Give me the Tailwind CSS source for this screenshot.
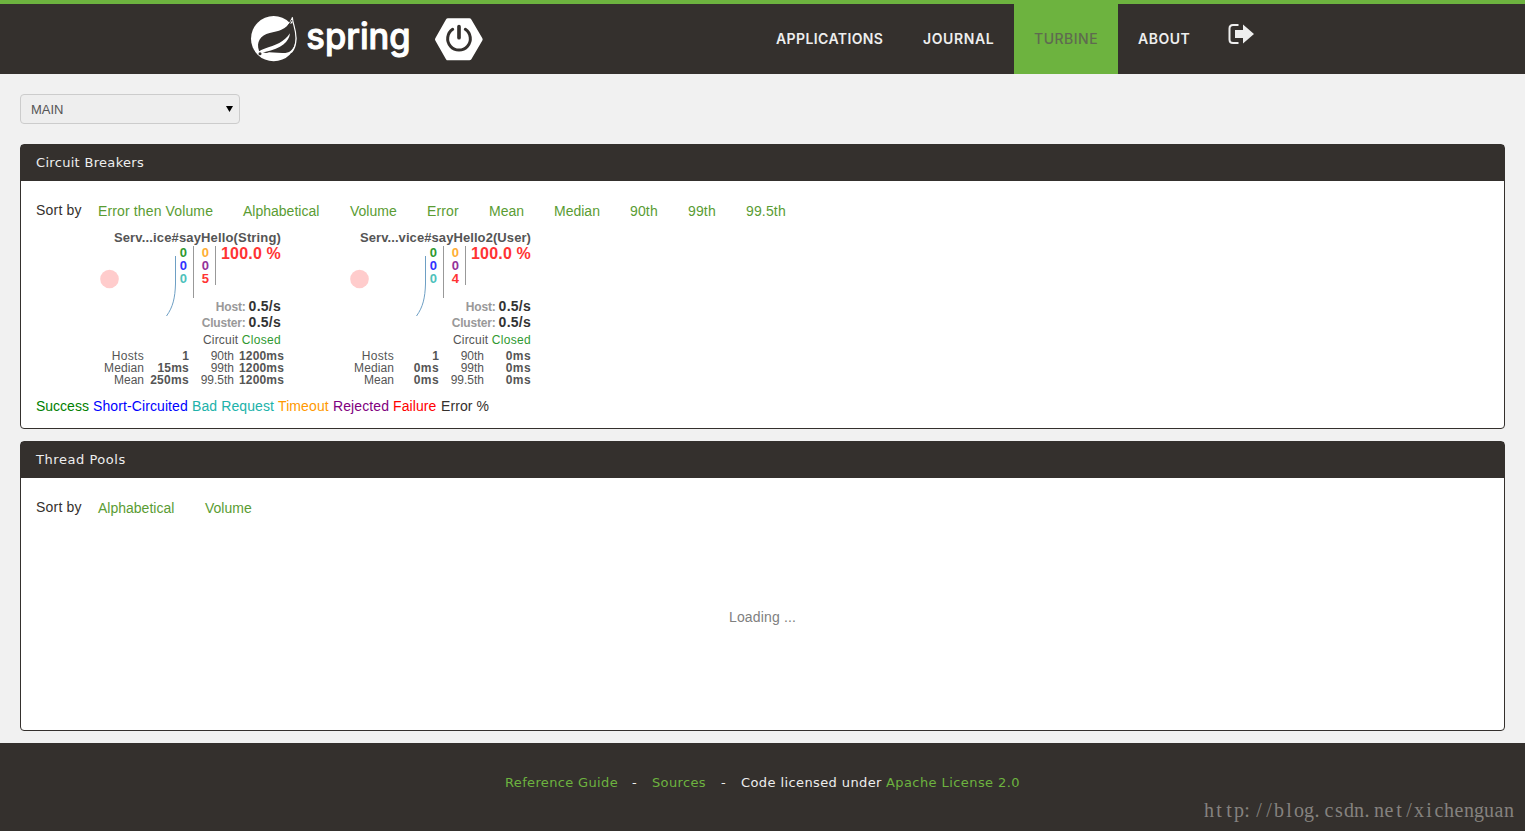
<!DOCTYPE html>
<html lang="en">
<head>
<meta charset="utf-8">
<title>Turbine</title>
<script src="https://cdn.jsdelivr.net/npm/@tailwindcss/browser@4"></script>
</head>
<body class="flex h-[831px] flex-col overflow-hidden bg-[#f1f1f1] font-['Liberation_Sans',sans-serif] text-[14px] leading-5 text-[#34302d]">

<header class="h-[74px] shrink-0 border-t-4 border-[#6db33f] bg-[#34302d]">
  <div class="flex h-[70px] pl-[245px]">
    <a class="flex w-[511px]">
      <svg class="mt-1 h-[60px] w-[250px]" viewBox="0 0 750 180">
        <circle cx="86" cy="92" r="68" fill="#fff"/>
        <path fill="#34302d" d="M42 128C33 102 46 82 74 75 100 69 124 66 139 36L146 38C155 62 157 90 149 110 143 127 132 136 112 135L72 133C64 137 52 134 42 128Z"/>
        <path fill="#fff" d="M38 136C44 127 50 125 58 122 92 112 118 102 135 76 132 102 110 121 60 132 54 135 48 138 38 136Z"/>
        <path fill="none" stroke="#fff" stroke-width="3.500" d="M142 28C143 48 153 62 153 90 153 110 148 124 139 134"/>
        <path fill="#fff" d="M131 47 142 26V46Z"/>
        <path fill="none" stroke="#34302d" stroke-width="3" d="M128 55 141 36"/>
        <circle cx="45" cy="137" r="4.500" fill="#34302d"/>
        <text x="184" y="122" textLength="313" lengthAdjust="spacingAndGlyphs" font-family="Inter, sans-serif" font-weight="500" font-size="108" fill="#fff" stroke="#fff" stroke-width="3" stroke-linejoin="round">spring</text>
        <path fill="#fff" stroke="#fff" stroke-width="14" stroke-linejoin="round" d="M577 94 609 38H673L706 94 673 150H609Z"/>
        <path fill="none" stroke="#34302d" stroke-width="9" stroke-linecap="round" d="M623 64A34 34 0 1 0 661 64"/>
        <path fill="none" stroke="#34302d" stroke-width="11" stroke-linecap="round" d="M642 56V89"/>
      </svg>
    </a>
    <nav class="flex font-['Inter',sans-serif] text-[14px] leading-[70px] font-semibold text-[#eee]">
      <a class="w-[147px] pl-5 tracking-[0.4px]">APPLICATIONS</a>
      <a class="w-[111px] pl-5 tracking-[0.6px]">JOURNAL</a>
      <a class="w-[104px] bg-[#6db33f] pl-5 font-medium tracking-[0.5px] text-[#5f6a50]">TURBINE</a>
      <a class="w-[91px] pl-5 tracking-[0.5px]">ABOUT</a>
      <a class="pt-5 pl-[19px]">
        <svg class="h-5 w-[26px]" viewBox="0 0 26 20">
          <path fill="none" stroke="#eee" stroke-width="2" d="M10.500 1H5Q1.500 1 1.500 4.500V15.500Q1.500 19 5 19H10.500"/>
          <path fill="#eee" d="M7 6H15V0.500L26 10 15 19.500V14H7Z"/>
        </svg>
      </a>
    </nav>
  </div>
</header>

<main class="flex flex-1 flex-col px-5 pt-5">
  <div class="mb-5 flex h-[30px] w-[220px] shrink-0 items-center justify-between rounded border border-[#ccc] bg-[#eee] pr-[6px] pl-[10px] text-[13px] text-[#555]">
    <span class="pt-0.5">MAIN</span>
    <svg class="h-[6px] w-[7px]" viewBox="0 0 7 6"><path d="M0 0H7L3.500 6Z"/></svg>
  </div>

  <section class="mb-3 h-[285px] shrink-0 rounded border border-[#34302d] bg-white">
    <h2 class="h-9 bg-[#34302d] pl-[15px] font-['DejaVu_Sans',sans-serif] text-[13px] leading-[35px] tracking-[0.31px] text-[#eee]">Circuit Breakers</h2>
    <div class="px-[15px] pt-[19px]">
      <div class="flex h-[31px] whitespace-nowrap text-[#5a9c33]">
        <span class="w-[62px] tracking-[0.2px] text-[#34302d]">Sort by</span>
        <div class="flex gap-[30px] pt-px">
          <a class="w-[115px] tracking-[0.13px]">Error then Volume</a>
          <a class="w-[77px]">Alphabetical</a>
          <a class="w-[47px]">Volume</a>
          <a class="w-[32px] tracking-[0.15px]">Error</a>
          <a class="w-[35px]">Mean</a>
          <a class="w-[46px]">Median</a>
          <a class="w-[28px] tracking-[0.15px]">90th</a>
          <a class="w-[28px] tracking-[0.15px]">99th</a>
          <a class="w-[40px] tracking-[0.15px]">99.5th</a>
        </div>
      </div>

      <div class="flex h-[165px] gap-[5px] text-[12px] leading-3 text-[#555]">
        <article class="relative w-[245px]">
          <svg class="absolute top-0 left-0 h-[100px] w-[150px]" viewBox="0 0 150 100">
            <circle cx="73.500" cy="48" r="9.300" fill="#fcc"/>
            <path fill="none" stroke="#6e9fc4" d="M139.500 25V53C139 67 137 76 130.500 85"/>
          </svg>
          <h3 class="h-[15px] text-right text-[13px] leading-[13px] font-bold tracking-[0.15px] whitespace-nowrap">Serv...ice#sayHello(String)</h3>
          <div class="flex h-[52px] justify-end text-right leading-[13px] font-bold">
            <div class="h-[52px] w-[22px] border-r border-[#999] pr-[6px] text-[13px]"><p class="text-[#2f992f]">0</p><p class="text-[#33f]">0</p><p class="text-[#4dc1bb]">0</p></div>
            <div class="h-[39px] w-[22px] border-r border-[#999] pr-[6px] text-[13px]"><p class="text-[#ffae33]">0</p><p class="text-[#933399]">0</p><p class="text-[#f33]">5</p></div>
            <p class="w-[65px] text-[16px] leading-[15px] tracking-[0.18px] whitespace-nowrap text-[#f33]">100.0 %</p>
          </div>
          <div class="text-right leading-4 font-bold tracking-[-0.2px] text-[#999]">
            <p class="h-4">Host: <span class="text-[14px] tracking-[0.25px] text-[#333]">0.5/s</span></p>
            <p class="h-4">Cluster: <span class="text-[14px] tracking-[0.25px] text-[#333]">0.5/s</span></p>
          </div>
          <p class="h-5 pt-1 text-right tracking-[0.2px]">Circuit <span class="tracking-[0.3px] text-[#2f992f]">Closed</span></p>
          <dl class="grid grid-cols-[108px_45px_45px_42px] text-right">
            <dt class="tracking-[0.3px]">Hosts</dt><dd class="font-bold">1</dd><dt>90th</dt><dd class="ml-[5px] text-left font-bold tracking-[0.16px]">1200ms</dd>
            <dt class="tracking-[0.1px]">Median</dt><dd class="font-bold tracking-[0.2px]">15ms</dd><dt>99th</dt><dd class="ml-[5px] text-left font-bold tracking-[0.16px]">1200ms</dd>
            <dt>Mean</dt><dd class="font-bold tracking-[0.3px]">250ms</dd><dt>99.5th</dt><dd class="ml-[5px] text-left font-bold tracking-[0.16px]">1200ms</dd>
          </dl>
        </article>
        <article class="relative w-[245px]">
          <svg class="absolute top-0 left-0 h-[100px] w-[150px]" viewBox="0 0 150 100">
            <circle cx="73.500" cy="48" r="9.300" fill="#fcc"/>
            <path fill="none" stroke="#6e9fc4" d="M139.500 25V53C139 67 137 76 130.500 85"/>
          </svg>
          <h3 class="h-[15px] text-right text-[13px] leading-[13px] font-bold tracking-[0.08px] whitespace-nowrap">Serv...vice#sayHello2(User)</h3>
          <div class="flex h-[52px] justify-end text-right leading-[13px] font-bold">
            <div class="h-[52px] w-[22px] border-r border-[#999] pr-[6px] text-[13px]"><p class="text-[#2f992f]">0</p><p class="text-[#33f]">0</p><p class="text-[#4dc1bb]">0</p></div>
            <div class="h-[39px] w-[22px] border-r border-[#999] pr-[6px] text-[13px]"><p class="text-[#ffae33]">0</p><p class="text-[#933399]">0</p><p class="text-[#f33]">4</p></div>
            <p class="w-[65px] text-[16px] leading-[15px] tracking-[0.18px] whitespace-nowrap text-[#f33]">100.0 %</p>
          </div>
          <div class="text-right leading-4 font-bold tracking-[-0.2px] text-[#999]">
            <p class="h-4">Host: <span class="text-[14px] tracking-[0.25px] text-[#333]">0.5/s</span></p>
            <p class="h-4">Cluster: <span class="text-[14px] tracking-[0.25px] text-[#333]">0.5/s</span></p>
          </div>
          <p class="h-5 pt-1 text-right tracking-[0.2px]">Circuit <span class="tracking-[0.3px] text-[#2f992f]">Closed</span></p>
          <dl class="grid grid-cols-[108px_45px_45px_47px] text-right">
            <dt class="tracking-[0.3px]">Hosts</dt><dd class="font-bold">1</dd><dt>90th</dt><dd class="font-bold tracking-[0.4px]">0ms</dd>
            <dt class="tracking-[0.1px]">Median</dt><dd class="font-bold tracking-[0.4px]">0ms</dd><dt>99th</dt><dd class="font-bold tracking-[0.4px]">0ms</dd>
            <dt>Mean</dt><dd class="font-bold tracking-[0.4px]">0ms</dd><dt>99.5th</dt><dd class="font-bold tracking-[0.4px]">0ms</dd>
          </dl>
        </article>
      </div>

      <div class="flex gap-1 tracking-[0.1px] whitespace-nowrap">
        <span class="w-[53px] tracking-normal text-[green]">Success</span>
        <span class="w-[95px] text-[blue]">Short-Circuited</span>
        <span class="w-[82px] text-[lightseagreen]">Bad Request</span>
        <span class="w-[51px] text-[#ff9900]">Timeout</span>
        <span class="w-[56px] text-[purple]">Rejected</span>
        <span class="w-[44px] text-[red]">Failure</span>
        <span>Error %</span>
      </div>
    </div>
  </section>

  <section class="mb-3 h-[290px] shrink-0 rounded border border-[#34302d] bg-white">
    <h2 class="h-9 bg-[#34302d] pl-[15px] font-['DejaVu_Sans',sans-serif] text-[13px] leading-[35px] tracking-[0.55px] text-[#eee]">Thread Pools</h2>
    <div class="px-[15px] pt-[19px]">
      <div class="flex text-[#5a9c33]">
        <span class="w-[62px] tracking-[0.2px] text-[#34302d]">Sort by</span>
        <div class="flex gap-[30px] pt-px">
          <a class="w-[77px]">Alphabetical</a>
          <a>Volume</a>
        </div>
      </div>
      <p class="pt-[89px] text-center tracking-[0.15px] text-[#808080]">Loading ...</p>
    </div>
  </section>
</main>

<footer class="flex h-[88px] shrink-0 flex-col bg-[#34302d] pt-[30px] font-['DejaVu_Sans',sans-serif] text-[13px] text-[#eee]">
  <p class="flex justify-center tracking-[0.35px] whitespace-nowrap">
    <a class="w-[127px] text-[#6db33f]">Reference Guide</a>
    <span class="w-5">-</span>
    <a class="w-[69px] text-[#6db33f]">Sources</a>
    <span class="w-5">-</span>
    <span class="w-[145px] tracking-[0.4px]">Code licensed under</span>
    <a class="w-[134px] tracking-[0.42px] text-[#6db33f]">Apache License 2.0</a>
  </p>
  <svg class="mt-1 mr-[10px] h-7 w-[312px] self-end" viewBox="0 0 312 28">
    <text y="20" text-anchor="middle" font-family="Liberation Serif, serif" font-size="20" fill="#85827f" x="6 16 26 36 44 56 66 76 86 96 106 114 126 136 146 156 164 176 186 196 206 216 226 236 246 256 266 276 286 296 306">http://blog.csdn.net/xichenguan</text>
  </svg>
</footer>
</body>
</html>
